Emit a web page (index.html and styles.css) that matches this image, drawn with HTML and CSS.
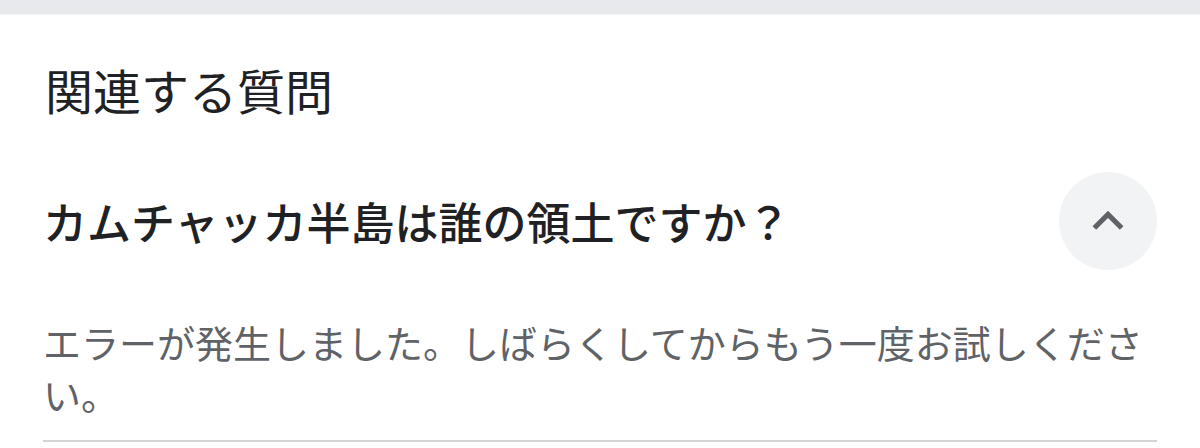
FILE: index.html
```html
<!DOCTYPE html>
<html lang="ja">
<head>
  <meta charset="UTF-8">
  <meta name="viewport" content="width=device-width, initial-scale=1.0">
  <title>関連する質問</title>
  <link rel="stylesheet" href="styles.css">
</head>
<body>
  <div class="topbar"></div>

  <div class="related">
    <h2 class="related-title">関連する質問</h2>

    <div class="question">
      <div class="question-text">カムチャッカ半島は誰の領土ですか？</div>
      <button class="toggle" aria-label="閉じる">
        <svg viewBox="0 0 24 24" width="62" height="62">
          <path d="M12 8l-6 6 1.41 1.41L12 10.83l4.59 4.58L18 14z" fill="#5f6368"/>
        </svg>
      </button>
    </div>

    <div class="answer">
      エラーが発生しました。しばらくしてからもう一度お試しください。
    </div>
  </div>
</body>
</html>
```

FILE: styles.css
```css
body {
  margin: 0;
  background: #fff;
  font-family: "Noto Sans CJK JP", "Noto Sans", sans-serif;
  color: #202124;
}
.topbar {
  height: 14px;
  background: #e8e9ec;
  border-bottom: 1px solid #f2f3f5;
}
.related {
  padding: 0 43px;
}
.related-title {
  margin: 42px 0 0 2px;
  font-size: 48px;
  font-weight: 400;
  line-height: 64px;
}
.question {
  display: flex;
  align-items: center;
  justify-content: space-between;
  margin-top: 51px;
}
.question-text {
  font-size: 44px;
  font-weight: 500;
  line-height: 56px;
}
.toggle {
  width: 98px;
  height: 98px;
  border: 0;
  border-radius: 50%;
  background: #f1f3f4;
  padding: 0;
  display: flex;
  align-items: center;
  justify-content: center;
}
.answer {
  margin-top: 46px;
  padding-bottom: 20px;
  font-size: 38px;
  line-height: 52px;
  color: #5f6368;
  border-bottom: 2px solid #d3d4d6;
}
```
